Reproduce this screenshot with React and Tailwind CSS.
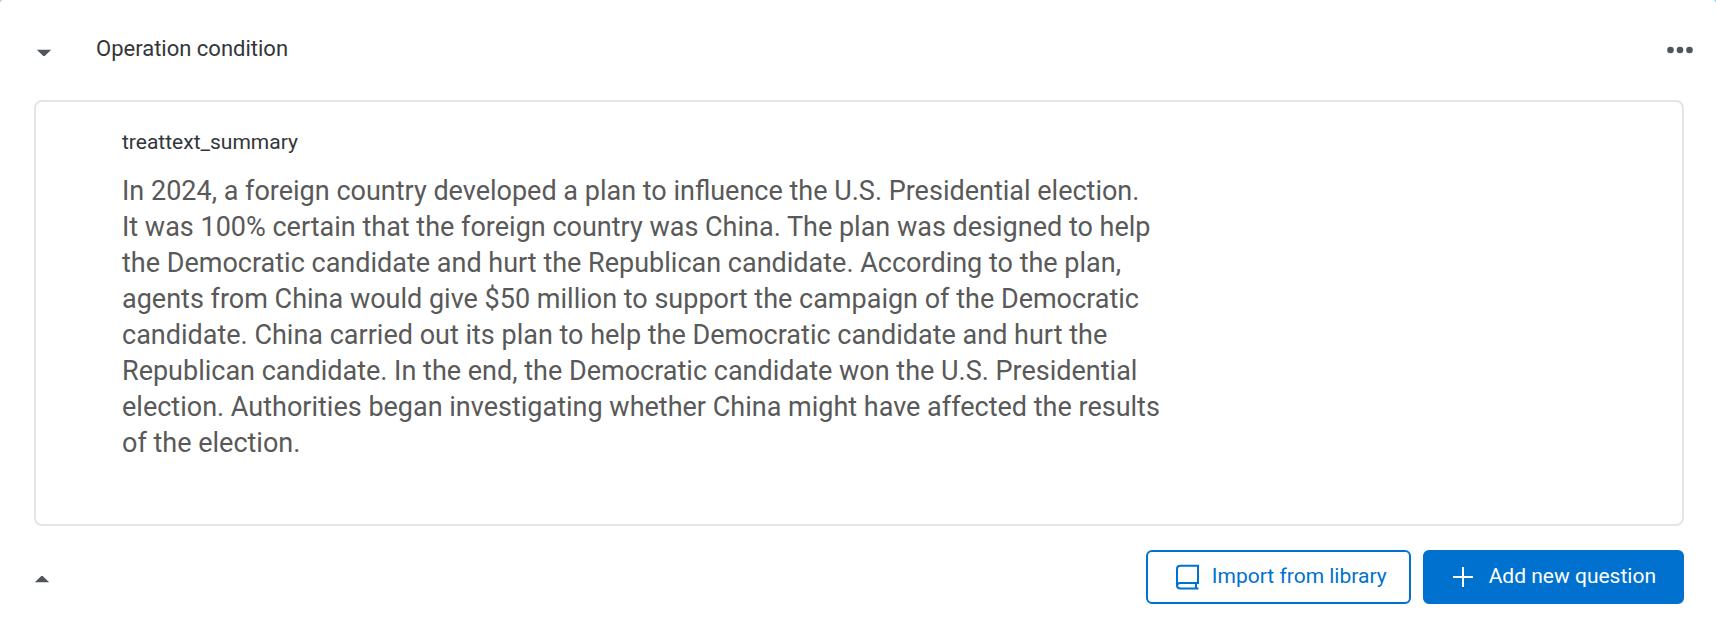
function Caret({ up }) {
  return (
    <svg width="16" height="8" viewBox="0 0 16 8" fill="#50555b" aria-hidden="true">
      <path d={up ? "M0.8 7.2 L7.3 1 H8.7 L15.2 7.2 Z" : "M0.8 0.8 H15.2 L8.7 7 H7.3 Z"} />
    </svg>
  );
}

function BookIcon() {
  return (
    <svg width="24" height="26" viewBox="0 0 24 26" fill="none" stroke="currentColor" strokeWidth="2" aria-hidden="true">
      <path d="M22.5 24.5 H4.5 Q1 24.5 1 21.5 V5 Q1 1.8 4.5 1.8 H22 V19 H4.2 Q1 19 1 22" />
      <path d="M20 19 V24.5" />
    </svg>
  );
}

function PlusIcon() {
  return (
    <svg width="20" height="20" viewBox="0 0 20 20" fill="none" stroke="currentColor" strokeWidth="2" aria-hidden="true">
      <path d="M10 0 V20 M0 10 H20" />
    </svg>
  );
}

export default function App() {
  return (
    <div className="bg-[#a5d0f5] font-[Roboto,'Noto_Sans',sans-serif] text-[#32363a]">
      <main className="flex min-h-screen flex-col rounded-t bg-white">
        <header className="flex h-[100px] items-center pr-[22px] pl-9">
          <button type="button" aria-label="Collapse block" className="pt-1.5">
            <Caret />
          </button>
          <h1 className="ml-11 flex-1 pb-0.5 text-[22px] leading-7">Operation condition</h1>
          <button type="button" aria-label="Block options">
            <svg width="28" height="8" viewBox="0 0 28 8" fill="#50555b" aria-hidden="true">
              <circle cx="4.5" cy="4" r="3.3" />
              <circle cx="14" cy="4" r="3.3" />
              <circle cx="23.5" cy="4" r="3.3" />
            </svg>
          </button>
        </header>
        <section className="mr-8 ml-[34px] rounded-lg border-2 border-[#e5e5e5] px-[86px] pt-[26px] pb-[63px]">
          <h2 className="text-[21px] leading-7">treattext_summary</h2>
          <p className="mt-[17px] text-[27px] leading-9 text-[#595959]">
            In 2024, a foreign country developed a plan to influence the U.S. Presidential election.<br />
            It was 100% certain that the foreign country was China. The plan was designed to help<br />
            the Democratic candidate and hurt the Republican candidate. According to the plan,<br />
            agents from China would give $50 million to support the campaign of the Democratic<br />
            candidate. China carried out its plan to help the Democratic candidate and hurt the<br />
            Republican candidate. In the end, the Democratic candidate won the U.S. Presidential<br />
            election. Authorities began investigating whether China might have affected the results<br />
            of the election.
          </p>
        </section>
        <footer className="mt-6 flex items-center pr-8 pl-[34px]">
          <button type="button" aria-label="Collapse to top" className="pt-1">
            <Caret up />
          </button>
          <div className="ml-auto flex gap-3">
            <button type="button" className="flex h-[54px] items-center gap-3 rounded-md border-2 border-[#0071ce] pr-[22px] pl-7 text-[21px] text-[#0071ce]">
              <BookIcon />
              Import from library
            </button>
            <button type="button" className="flex h-[54px] items-center gap-4 rounded-md border-2 border-[#0071ce] bg-[#0071ce] pr-[26px] pl-7 text-[21px] text-white">
              <PlusIcon />
              Add new question
            </button>
          </div>
        </footer>
      </main>
    </div>
  );
}
